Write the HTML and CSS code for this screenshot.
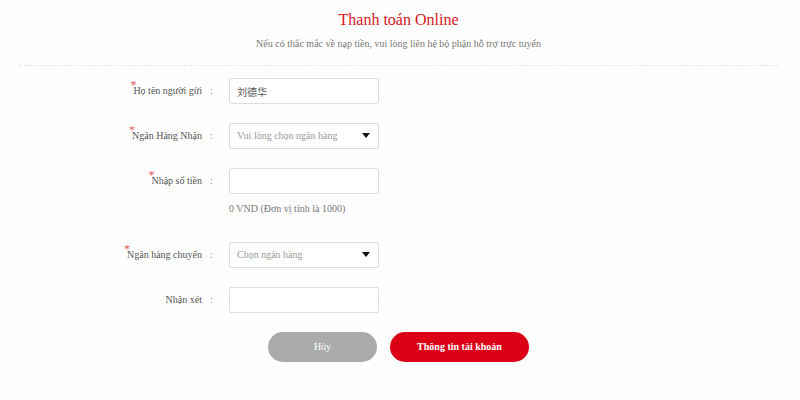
FILE: index.html
```html
<!DOCTYPE html>
<html lang="vi">
<head>
    <meta charset="UTF-8">
    <meta name="viewport" content="width=device-width, initial-scale=1">
    <title>Thanh toán Online</title>
    <link rel="stylesheet" href="styles.css">
</head>
<body>
    <div class="header">
        <h1>Thanh toán Online</h1>
        <p>Nếu có thắc mắc về nạp tiền, vui lòng liên hệ bộ phận hỗ trợ trực tuyến</p>
    </div>

    <form class="payment-form">
        <div class="form-row">
            <label class="required" for="senderName">Họ tên người gửi</label>
            <span class="colon">:</span>
            <input class="field" type="text" id="senderName" value="刘德华">
        </div>
        <div class="form-row">
            <label class="required" for="receiveBank">Ngân Hàng Nhận</label>
            <span class="colon">:</span>
            <div class="select-box">
                <select class="field" id="receiveBank">
                    <option>Vui lòng chọn ngân hàng</option>
                </select>
            </div>
        </div>
        <div class="form-row">
            <label class="required" for="amount">Nhập số tiền</label>
            <span class="colon">:</span>
            <input class="field" type="text" id="amount">
            <p class="hint">0 VND (Đơn vị tính là 1000)</p>
        </div>
        <div class="form-row">
            <label class="required" for="sendBank">Ngân hàng chuyển</label>
            <span class="colon">:</span>
            <div class="select-box">
                <select class="field" id="sendBank">
                    <option>Chọn ngân hàng</option>
                </select>
            </div>
        </div>
        <div class="form-row">
            <label for="comment">Nhận xét</label>
            <span class="colon">:</span>
            <input class="field" type="text" id="comment">
        </div>

        <div class="actions">
            <button type="button" class="btn btn-cancel">Hủy</button>
            <button type="submit" class="btn btn-submit">Thông tin tài khoản</button>
        </div>
    </form>
</body>
</html>
```
FILE: styles.css
```css
* {
    box-sizing: border-box;
}

body {
    margin: 0;
    padding: 0 22px 0 19px;
    font-family: "Liberation Serif", "Noto Sans CJK SC", serif;
    font-size: 10px;
    line-height: 12px;
    color: #555;
    background-color: #fefefe;
}

.header {
    padding: 10px 0 15px;
    text-align: center;
    border-bottom: 1px dashed #e6e6e6;
}

.header h1 {
    margin: 0 0 8px;
    font-size: 16px;
    font-weight: 400;
    line-height: 20px;
    color: #d9141e;
}

.header p {
    margin: 0;
    color: #777;
}

.payment-form {
    padding-top: 12px;
}

.form-row {
    display: grid;
    grid-template-columns: 183px 27px 150px;
    align-items: center;
    margin-bottom: 19px;
}

.form-row label {
    justify-self: end;
    position: relative;
}

.required::before {
    content: "*";
    position: absolute;
    top: -6px;
    left: -3px;
    font-size: 12px;
    color: #e8565b;
}

.colon {
    padding-left: 8px;
    color: #888;
}

.field {
    display: block;
    width: 100%;
    height: 26px;
    padding: 0 7px;
    font: inherit;
    color: #555;
    background-color: #fff;
    border: 1px solid #ddd;
    border-radius: 2px;
}

.select-box {
    position: relative;
}

.select-box select {
    appearance: none;
    color: #999;
}

.select-box::after {
    content: "";
    position: absolute;
    top: 10px;
    right: 9px;
    border: 4px solid transparent;
    border-top: 5px solid #111;
    border-bottom: 0;
    pointer-events: none;
}

.hint {
    grid-column: 3;
    margin: 9px 0 8px;
    color: #777;
}

.actions {
    display: flex;
    justify-content: center;
    gap: 13px;
    padding-bottom: 20px;
}

.btn {
    height: 30px;
    padding: 0 27px;
    font: inherit;
    color: #fff;
    border: 0;
    border-radius: 15px;
}

.btn-cancel {
    min-width: 109px;
    background-color: #aaa;
}

.btn-submit {
    min-width: 139px;
    font-weight: 700;
    background-color: #db0016;
}
```
